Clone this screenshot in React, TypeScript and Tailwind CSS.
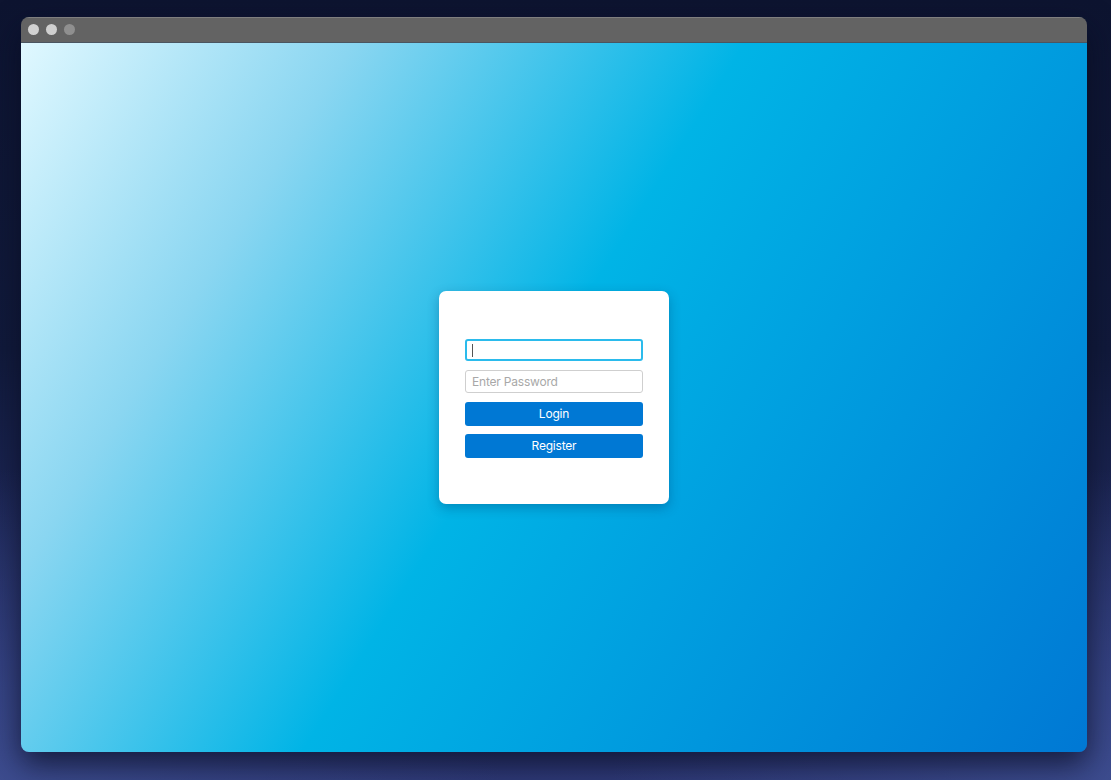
import React from "react";

export default function App() {
  return (
    <div
      className="h-[780px] w-full overflow-hidden pt-[17px] pl-[21px]"
      style={{
        background:
          "radial-gradient(ellipse 45% 40% at 0% 100%, rgba(62,78,145,0.9) 0%, rgba(62,78,145,0) 100%), radial-gradient(ellipse 45% 40% at 100% 100%, rgba(62,78,145,0.9) 0%, rgba(62,78,145,0) 100%), linear-gradient(180deg, #0d1430 0%, #111a3b 45%, #26306a 85%, #2f3a78 100%)",
      }}
    >
      <div className="flex h-[735px] w-[1066px] flex-col overflow-hidden rounded-[8px] shadow-[0_12px_30px_rgba(8,12,35,0.75)]">
        <div className="flex h-[26px] shrink-0 items-center gap-[7px] border-b border-[#4b5560] bg-[#636363] pl-[7px] shadow-[inset_0_1px_0_rgba(255,255,255,0.18)]">
          <span className="h-[11px] w-[11px] rounded-full bg-[#d2d2d2]" />
          <span className="h-[11px] w-[11px] rounded-full bg-[#cfcfcf]" />
          <span className="h-[11px] w-[11px] rounded-full bg-[#8f8f8f]" />
        </div>
        <div className="flex flex-1 items-center justify-center bg-[linear-gradient(122deg,#e0f8ff_0%,#8ad6f1_22%,#00b4e6_48%,#0078d4_100%)] pb-[14px]">
          <div className="mt-[14px] flex w-[230px] flex-col gap-[9px] rounded-[7px] bg-white px-[26px] pb-[46px] pt-[48px] shadow-[0_4px_12px_rgba(0,40,90,0.3)] font-['Inter','Noto_Sans',sans-serif] tracking-[-0.2px]">
            <div className="flex h-[22px] items-center rounded-[3px] border-2 border-[#2bbbec] px-[5px]">
              <span className="h-[13px] w-px bg-[#555]" />
            </div>
            <div className="flex h-[23px] items-center rounded-[3px] border border-[#cfcfcf] px-[6px] text-[12px] text-[#a8a8a8]">
              Enter Password
            </div>
            <div className="flex h-[24px] items-center justify-center rounded-[3px] bg-[#0078d4] text-[12px] text-white">
              Login
            </div>
            <div className="mt-[-1px] flex h-[24px] items-center justify-center rounded-[3px] bg-[#0078d4] text-[12px] text-white">
              Register
            </div>
          </div>
        </div>
      </div>
    </div>
  );
}
